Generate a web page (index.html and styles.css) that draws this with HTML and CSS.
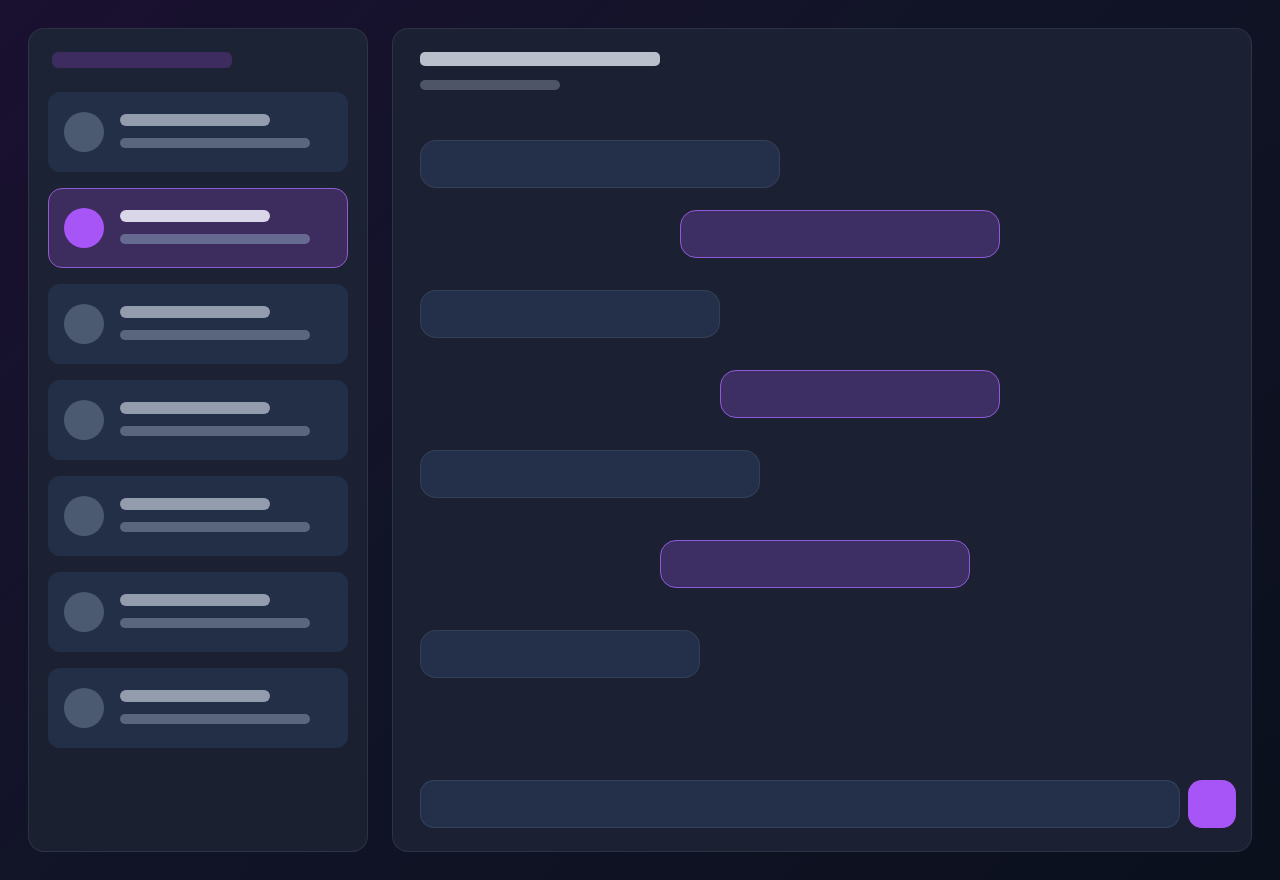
FILE: index.html
```html
<!DOCTYPE html>
<html lang="en">
<head>
<meta charset="utf-8">
<title>Chat skeleton</title>
<link rel="stylesheet" href="styles.css">
</head>
<body>
<div class="app">
  <aside class="sidebar">
    <div class="side-title"></div>
    <div class="list">
      <div class="item"><div class="avatar"></div><div class="lines"><div class="l1"></div><div class="l2"></div></div></div>
      <div class="item active"><div class="avatar"></div><div class="lines"><div class="l1"></div><div class="l2"></div></div></div>
      <div class="item"><div class="avatar"></div><div class="lines"><div class="l1"></div><div class="l2"></div></div></div>
      <div class="item"><div class="avatar"></div><div class="lines"><div class="l1"></div><div class="l2"></div></div></div>
      <div class="item"><div class="avatar"></div><div class="lines"><div class="l1"></div><div class="l2"></div></div></div>
      <div class="item"><div class="avatar"></div><div class="lines"><div class="l1"></div><div class="l2"></div></div></div>
      <div class="item"><div class="avatar"></div><div class="lines"><div class="l1"></div><div class="l2"></div></div></div>
    </div>
  </aside>
  <main class="chat">
    <header class="chat-head">
      <div class="head-title"></div>
      <div class="head-sub"></div>
    </header>
    <div class="messages">
      <div class="msg in" style="width:360px;margin-top:0"></div>
      <div class="msg out" style="width:320px;margin-left:260px;margin-top:22px"></div>
      <div class="msg in" style="width:300px;margin-top:32px"></div>
      <div class="msg out" style="width:280px;margin-left:300px;margin-top:32px"></div>
      <div class="msg in" style="width:340px;margin-top:32px"></div>
      <div class="msg out" style="width:310px;margin-left:240px;margin-top:42px"></div>
      <div class="msg in" style="width:280px;margin-top:42px"></div>
    </div>
    <div class="composer">
      <div class="input"></div>
      <div class="send"></div>
    </div>
  </main>
</div>
</body>
</html>
```

FILE: styles.css
```css
* { box-sizing: border-box; }
html, body { margin: 0; height: 100%; }
body {
  width: 1280px;
  height: 880px;
  overflow: hidden;
  font-family: "Inter", "Liberation Sans", sans-serif;
  background: linear-gradient(135deg, #1a1030 0%, #111427 45%, #0b101d 100%);
}
.app {
  display: flex;
  gap: 24px;
  padding: 28px;
  height: 880px;
}
.sidebar {
  width: 340px;
  flex: none;
  border-radius: 16px;
  border: 1px solid rgba(148, 163, 184, 0.14);
  background: linear-gradient(180deg, #1c2334 0%, #1b2031 100%);
  padding: 23px 19px;
  display: flex;
  flex-direction: column;
}
.side-title {
  width: 180px;
  height: 16px;
  margin-left: 4px;
  border-radius: 6px;
  background: #3c2c5f;
}
.list {
  margin-top: 24px;
  display: flex;
  flex-direction: column;
  gap: 16px;
}
.item {
  height: 80px;
  border-radius: 12px;
  background: #232f47;
  border: 1px solid transparent;
  display: flex;
  align-items: center;
  padding: 0 15px;
  gap: 16px;
}
.avatar {
  width: 40px;
  height: 40px;
  border-radius: 50%;
  background: #4b5a70;
  flex: none;
}
.lines { display: flex; flex-direction: column; gap: 12px; padding-bottom: 2px; }
.l1 { width: 150px; height: 12px; border-radius: 6px; background: #939cad; }
.l2 { width: 190px; height: 10px; border-radius: 5px; background: #5a667e; }
.item.active {
  background: #3c2d5e;
  border-color: #8f5cd2;
  border-radius: 14px;
}
.item.active .avatar { background: #a855f7; }
.item.active .l1 { background: #d9d6e8; }
.item.active .l2 { background: #666a91; }

.chat {
  flex: 1;
  border-radius: 16px;
  border: 1px solid rgba(148, 163, 184, 0.14);
  background: #1b2132;
  display: flex;
  flex-direction: column;
  padding: 23px 15px 23px 27px;
}
.head-title { width: 240px; height: 14px; border-radius: 5px; background: #b9c0cb; }
.head-sub { width: 140px; height: 10px; border-radius: 5px; background: #4d5567; margin-top: 14px; }
.messages {
  margin-top: 50px;
  display: flex;
  flex-direction: column;
  align-items: flex-start;
}
.msg {
  height: 48px;
  border-radius: 16px;
  flex: none;
}
.msg.in {
  background: #243049;
  border: 1px solid rgba(148, 163, 184, 0.14);
}
.msg.out {
  background: #3d2e63;
  border: 1px solid #8f5ad8;
}
.composer {
  margin-top: auto;
  display: flex;
  gap: 8px;
}
.input {
  flex: 1;
  height: 48px;
  border-radius: 14px;
  background: #243049;
  border: 1px solid rgba(148, 163, 184, 0.16);
}
.send {
  width: 48px;
  height: 48px;
  border-radius: 14px;
  background: #a855f7;
  flex: none;
}
```
